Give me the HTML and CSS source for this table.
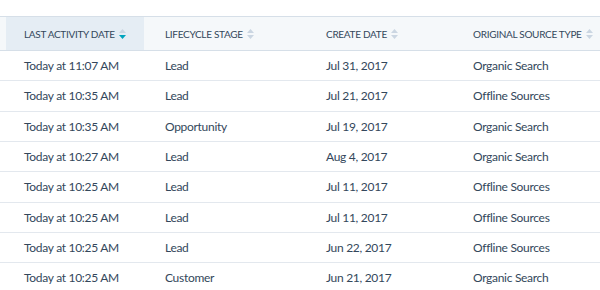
FILE: index.html
```html
<!DOCTYPE html>
<html>
<head>
<meta charset="utf-8">
<link rel="stylesheet" href="styles.css">
</head>
<body>
<div class="table">
  <div class="row head">
    <div class="cell c1 sorted">Last activity date <svg class="sort" width="7" height="10" viewBox="0 0 7 10"><path class="up" d="M0 4 L3.5 0 L7 4Z"/><path class="down on" d="M0 6 L3.5 10 L7 6Z"/></svg></div>
    <div class="cell c2">Lifecycle stage <svg class="sort" width="7" height="10" viewBox="0 0 7 10"><path class="up" d="M0 4 L3.5 0 L7 4Z"/><path class="down" d="M0 6 L3.5 10 L7 6Z"/></svg></div>
    <div class="cell c3">Create date <svg class="sort" width="7" height="10" viewBox="0 0 7 10"><path class="up" d="M0 4 L3.5 0 L7 4Z"/><path class="down" d="M0 6 L3.5 10 L7 6Z"/></svg></div>
    <div class="cell c4">Original source type <svg class="sort" width="7" height="10" viewBox="0 0 7 10"><path class="up" d="M0 4 L3.5 0 L7 4Z"/><path class="down" d="M0 6 L3.5 10 L7 6Z"/></svg></div>
  </div>
  <div class="row"><div class="cell c1">Today at 11:07 AM</div><div class="cell c2">Lead</div><div class="cell c3">Jul 31, 2017</div><div class="cell c4">Organic Search</div></div>
  <div class="row"><div class="cell c1">Today at 10:35 AM</div><div class="cell c2">Lead</div><div class="cell c3">Jul 21, 2017</div><div class="cell c4">Offline Sources</div></div>
  <div class="row"><div class="cell c1">Today at 10:35 AM</div><div class="cell c2">Opportunity</div><div class="cell c3">Jul 19, 2017</div><div class="cell c4">Organic Search</div></div>
  <div class="row"><div class="cell c1">Today at 10:27 AM</div><div class="cell c2">Lead</div><div class="cell c3">Aug 4, 2017</div><div class="cell c4">Organic Search</div></div>
  <div class="row"><div class="cell c1">Today at 10:25 AM</div><div class="cell c2">Lead</div><div class="cell c3">Jul 11, 2017</div><div class="cell c4">Offline Sources</div></div>
  <div class="row"><div class="cell c1">Today at 10:25 AM</div><div class="cell c2">Lead</div><div class="cell c3">Jul 11, 2017</div><div class="cell c4">Offline Sources</div></div>
  <div class="row"><div class="cell c1">Today at 10:25 AM</div><div class="cell c2">Lead</div><div class="cell c3">Jun 22, 2017</div><div class="cell c4">Offline Sources</div></div>
  <div class="row"><div class="cell c1">Today at 10:25 AM</div><div class="cell c2">Customer</div><div class="cell c3">Jun 21, 2017</div><div class="cell c4">Organic Search</div></div>
</div>
</body>
</html>
```
FILE: styles.css
```css
html, body {
  margin: 0;
  padding: 0;
  background: #fff;
  overflow: hidden;
}
body {
  font-family: Lato, "Open Sans", sans-serif;
  color: #33475b;
  font-size: 12px;
  letter-spacing: -0.3px;
}
.table {
  margin-top: 16px;
}
.row {
  display: grid;
  grid-template-columns: 138px 161px 147px 1fr;
  padding-left: 6px;
  height: 30.33px;
  box-sizing: border-box;
  border-bottom: 1px solid #e3e8ee;
  align-items: center;
}
.row.head {
  height: 35px;
  background: #f5f8fa;
  border-top: 1px solid #d6dfe8;
  border-bottom: 1px solid #d6dfe8;
  align-items: stretch;
}
.cell {
  white-space: nowrap;
  padding-left: 21px;
}
.cell.c1 {
  padding-left: 18px;
}
.head .cell {
  display: flex;
  align-items: center;
  gap: 4px;
  text-transform: uppercase;
  font-size: 10px;
  font-weight: 400;
  letter-spacing: -0.3px;
}
.head .cell.sorted {
  background: #e5edf4;
}
.sort .up, .sort .down {
  fill: #cbd6e2;
}
.sort .down.on {
  fill: #00a4bd;
}
```
